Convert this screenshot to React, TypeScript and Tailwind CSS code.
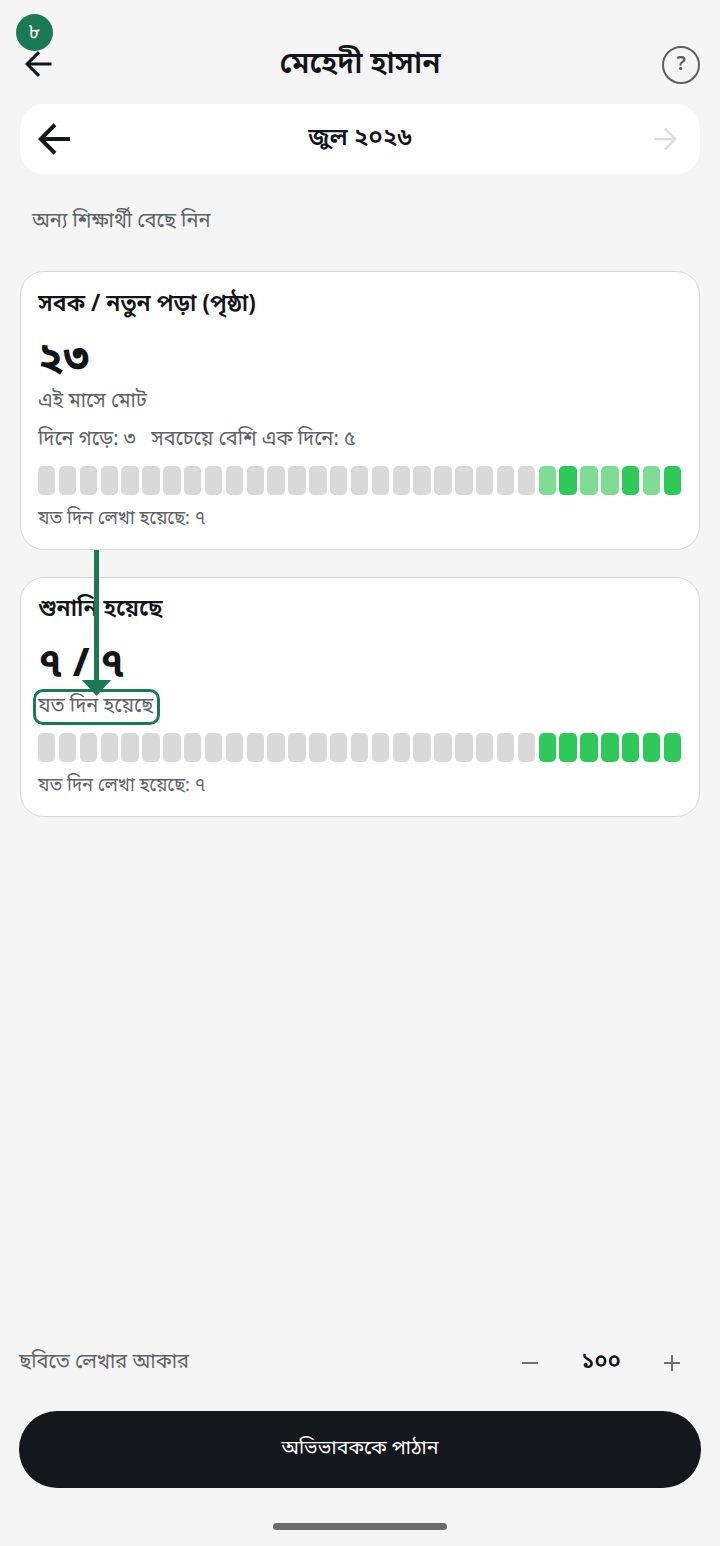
const F = { fontFamily: '"Noto Sans Bengali","Noto Serif Bengali","Lohit Bengali","Noto Sans","Noto Sans CJK SC",sans-serif' };

const Bars = ({ data }: { data: string[] }) => (
  <div className="flex gap-[3.5px] h-[29px] mr-[1px]">
    {Array.from({ length: 24 }).map((_, i) => (
      <div key={i} className="flex-1 rounded-[5px] bg-[#d9d9d9]" />
    ))}
    {data.map((c, i) => (
      <div key={i} className={c === "d" ? "flex-1 rounded-[5px] bg-[#2fc95a]" : "flex-1 rounded-[5px] bg-[#7fdc95]"} />
    ))}
  </div>
);

const Arrow = ({ size, w, cls }: { size: number; w: number; cls: string }) => (
  <svg width={size} height={size} viewBox="0 0 24 24" fill="none" stroke="currentColor" strokeWidth={w} className={cls}>
    <path d="M22 12H3M12 2.5L2.5 12l9.5 9.5" />
  </svg>
);

export default function App() {
  return (
    <div style={F} className="relative w-[720px] h-[1546px] bg-[#f5f5f5] flex flex-col overflow-hidden">
      <header className="h-[104px] pt-[44px] pl-[24px] pr-[20px] flex items-start justify-between">
        <Arrow size={30} w={2.4} cls="text-[#14171a] mt-[5px]" />
        <h1 className="text-[30px] leading-[38px] font-semibold text-[#111418] mt-[2px] ml-[4px]">মেহেদী হাসান</h1>
        <div className="w-[38px] h-[38px] mt-[2px] rounded-full border-[2.5px] border-[#5f5f5f] flex items-center justify-center text-[20px] font-semibold text-[#5f5f5f]">?</div>
      </header>

      <div className="mx-[20px] h-[70px] rounded-[24px] bg-white flex items-center justify-between pl-[17px] pr-[22px]">
        <Arrow size={36} w={2.6} cls="text-[#14171a]" />
        <div className="text-[24px] font-semibold text-[#111418] mr-[5px]">জুল ২০২৬</div>
        <Arrow size={26} w={2.2} cls="text-[#dcdcdc] rotate-180" />
      </div>

      <p className="mt-[34px] ml-[32px] text-[20px] leading-[28px] text-[#5f6368]">অন্য শিক্ষার্থী বেছে নিন</p>

      <section className="mt-[35px] mx-[20px] h-[279px] rounded-[24px] bg-white border border-[#d8d8d8] px-[17px] pt-[17px] flex flex-col">
        <h2 className="text-[23px] leading-[32px] font-semibold text-[#111418]">সবক / নতুন পড়া (পৃষ্ঠা)</h2>
        <div className="mt-[16px] text-[42px] leading-[48px] font-bold text-[#111418]">২৩</div>
        <p className="mt-[3px] text-[20px] leading-[28px] text-[#5f6368]">এই মাসে মোট</p>
        <p className="mt-[10px] text-[20px] leading-[28px] text-[#5f6368] whitespace-pre">দিনে গড়ে: ৩   সবচেয়ে বেশি এক দিনে: ৫</p>
        <div className="mt-[12px]"><Bars data={["l", "d", "l", "l", "d", "l", "d"]} /></div>
        <p className="mt-[10px] text-[18.3px] leading-[28px] text-[#5f6368]">যত দিন লেখা হয়েছে: ৭</p>
      </section>

      <section className="mt-[27px] mx-[20px] h-[240px] rounded-[24px] bg-white border border-[#d8d8d8] px-[17px] pt-[16px] flex flex-col">
        <h2 className="text-[23px] leading-[32px] font-semibold text-[#111418]">শুনানি হয়েছে</h2>
        <div className="mt-[16px] text-[40px] leading-[48px] font-bold text-[#111418]">৭ / ৭</div>
        <p className="mt-[3px] text-[20px] leading-[28px] text-[#5f6368]">যত দিন হয়েছে</p>
        <div className="mt-[12px]"><Bars data={["d", "d", "d", "d", "d", "d", "d"]} /></div>
        <p className="mt-[10px] text-[18.3px] leading-[28px] text-[#5f6368]">যত দিন লেখা হয়েছে: ৭</p>
      </section>

      <div className="mt-auto mx-[19px] flex items-center justify-between">
        <span className="text-[20px] leading-[28px] text-[#5f6368]">ছবিতে লেখার আকার</span>
        <div className="flex items-center mr-[21px] text-[#5f6368]">
          <span className="block w-[16px] h-[2px] bg-[#707070]" />
          <span className="w-[126px] text-center text-[22px] font-semibold text-[#111418]">১০০</span>
          <svg width="16" height="16" viewBox="0 0 16 16" stroke="#707070" strokeWidth="2"><path d="M8 0v16M0 8h16" /></svg>
        </div>
      </div>

      <button className="mt-[32px] mx-[19px] h-[77px] rounded-[38px] bg-[#14171c] text-white text-[19.5px] flex items-center justify-center">অভিভাবককে পাঠান</button>

      <div className="mt-[35px] mb-[16px] mx-auto w-[174px] h-[7px] rounded-full bg-[#6b6b6b]" />

      {/* annotation overlays */}
      <div className="absolute left-[16px] top-[14px] w-[37px] h-[37px] rounded-full bg-[#1b7a54] text-white flex items-center justify-center text-[20px]">৮</div>
      <div className="absolute left-[94px] top-[550px] w-[5px] h-[135px] bg-[#1b7a54]" />
      <svg className="absolute left-[82px] top-[680px]" width="29" height="16" viewBox="0 0 29 16"><path d="M0 0h29L14.500 16z" fill="#1b7a54" /></svg>
      <div className="absolute left-[33px] top-[689px] w-[127px] h-[36px] rounded-[10px] border-[3px] border-[#1b7a54]" />
    </div>
  );
}
